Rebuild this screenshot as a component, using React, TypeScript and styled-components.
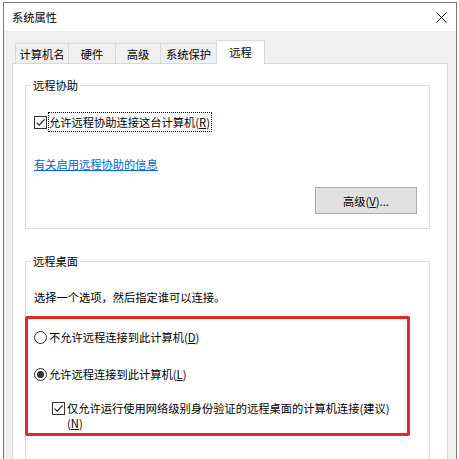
import React from 'react';
import styled, { createGlobalStyle } from 'styled-components';

const Global = createGlobalStyle`
  html, body { margin: 0; padding: 0; background: #fff; }
  body {
    font-family: "Noto Sans CJK SC", "Noto Sans", sans-serif;
    font-size: 11.25px;
    color: #000;
    overflow: hidden;
  }
  * { box-sizing: border-box; }
`;

const Page = styled.div`
  height: 459px;
  overflow: hidden;
  padding: 2px 0 0 3px;
`;

const Dialog = styled.div`
  width: 454px;
  height: 540px;
  border: 1px solid #7a7a7a;
  background: #f0f0f0;
  display: flex;
  flex-direction: column;
`;

const TitleBar = styled.div`
  height: 28px;
  flex: none;
  background: #fff;
  display: flex;
  align-items: center;
  justify-content: space-between;
  padding-left: 8px;
`;

const Title = styled.span`
  line-height: 16px;
`;

const CloseBox = styled.div`
  width: 30px;
  height: 28px;
  display: flex;
  align-items: center;
  justify-content: center;
`;

const Body = styled.div`
  flex: 1;
  display: flex;
  flex-direction: column;
  padding: 9px 8px 0 8px;
`;

const TabStrip = styled.div`
  height: 23px;
  display: flex;
  align-items: flex-end;
  padding-left: 3px;
  position: relative;
  z-index: 1;
`;

const Tab = styled.div<{ $w: number; $active?: boolean }>`
  width: ${(p) => p.$w}px;
  height: ${(p) => (p.$active ? 24 : 20)}px;
  margin-bottom: ${(p) => (p.$active ? -1 : 0)}px;
  margin-left: -1px;
  &:first-child { margin-left: 0; }
  border: 1px solid #d9d9d9;
  border-bottom: none;
  background: ${(p) => (p.$active ? '#fff' : '#f0f0f0')};
  display: flex;
  align-items: ${(p) => (p.$active ? 'flex-start' : 'center')};
  padding-top: ${(p) => (p.$active ? 3 : 0)}px;
  justify-content: center;
  line-height: 16px;
  position: relative;
  z-index: ${(p) => (p.$active ? 2 : 1)};
`;

const Panel = styled.div`
  flex: 1;
  background: #fff;
  border: 1px solid #d9d9d9;
  padding: 13px 17px 0 12px;
`;

const Group = styled.fieldset<{ $gap?: number; $tall?: boolean }>`
  margin: ${(p) => p.$gap ?? 0}px 0 0 0;
  padding: 0;
  border: 1px solid #dcdcdc;
  min-width: 0;
  min-height: ${(p) => (p.$tall ? '260px' : 'auto')};
`;

const Legend = styled.legend`
  padding: 0 2px;
  margin-left: 5px;
  line-height: 16px;
`;

const GroupBody = styled.div`
  display: flex;
  flex-direction: column;
  align-items: flex-start;
  padding: 0 8px 14px 8px;
`;

const CheckRow = styled.div<{ $mt: number }>`
  margin-top: ${(p) => p.$mt}px;
  height: 20px;
  display: flex;
  align-items: center;
  gap: 1px;
`;

const FocusLabel = styled.span`
  border: 1px dotted #000;
  height: 20px;
  display: flex;
  align-items: center;
  padding: 0 1px 0 0;
  line-height: 16px;
`;

const Link = styled.a`
  margin-top: 24px;
  line-height: 16px;
  color: #0066cc;
  text-decoration: underline;
  cursor: pointer;
`;

const Button = styled.button`
  margin-top: 15px;
  align-self: flex-end;
  margin-right: 4px;
  width: 102px;
  height: 27px;
  background: #e1e1e1;
  border: 1px solid #adadad;
  font: inherit;
  color: #000;
  padding: 0;
`;

const Desc = styled.div`
  margin-top: 20px;
  line-height: 16px;
`;

const Highlight = styled.div`
  margin-top: 11px;
  margin-left: -9px;
  width: 385px;
  border: 3px solid #e0282e;
  border-radius: 2px;
  padding: 10px 0 2px 6px;
  display: flex;
  flex-direction: column;
`;

const OptionRow = styled.div<{ $mt?: number }>`
  margin-top: ${(p) => p.$mt ?? 0}px;
  height: 16px;
  display: flex;
  align-items: center;
  gap: 2px;
  line-height: 16px;
`;

const SubCheckRow = styled.div`
  margin-top: 19px;
  padding-left: 18px;
  display: flex;
  align-items: flex-start;
  gap: 2px;
`;

const SubText = styled.span`
  line-height: 15px;
`;

const BoxIcon = styled.svg`
  flex: none;
  display: block;
`;

const Mn = styled.u`
  text-decoration: underline;
  text-underline-offset: 1px;
`;

const CheckBox: React.FC<{ style?: React.CSSProperties }> = ({ style }) => (
  <BoxIcon width="13" height="13" viewBox="0 0 13 13" style={style}>
    <rect x="0.5" y="0.5" width="12" height="12" fill="#fff" stroke="#333" />
    <path d="M2.6 6.6 L5.2 9.2 L10.6 3.4" fill="none" stroke="#222" strokeWidth="1.2" />
  </BoxIcon>
);

const Radio: React.FC<{ checked?: boolean }> = ({ checked }) => (
  <BoxIcon width="13" height="13" viewBox="0 0 13 13">
    <circle cx="6.5" cy="6.5" r="6" fill="#fff" stroke="#333" />
    {checked && <circle cx="6.5" cy="6.5" r="3.5" fill="#333" />}
  </BoxIcon>
);

const tabs = [
  { label: '计算机名', w: 54 },
  { label: '硬件', w: 48 },
  { label: '高级', w: 46 },
  { label: '系统保护', w: 57 },
  { label: '远程', w: 49, active: true },
];

export default function App() {
  return (
    <>
      <Global />
      <Page>
        <Dialog>
          <TitleBar>
            <Title>系统属性</Title>
            <CloseBox>
              <svg width="11" height="11" viewBox="0 0 11 11">
                <path d="M0.5 0.5 L10.5 10.5 M10.5 0.5 L0.5 10.5" stroke="#111" strokeWidth="1" />
              </svg>
            </CloseBox>
          </TitleBar>
          <Body>
            <TabStrip>
              {tabs.map((t) => (
                <Tab key={t.label} $w={t.w} $active={t.active}>
                  {t.label}
                </Tab>
              ))}
            </TabStrip>
            <Panel>
              <Group>
                <Legend>远程协助</Legend>
                <GroupBody>
                  <CheckRow $mt={19}>
                    <CheckBox />
                    <FocusLabel>
                      允许远程协助连接这台计算机(<Mn>R</Mn>)
                    </FocusLabel>
                  </CheckRow>
                  <Link>有关启用远程协助的信息</Link>
                  <Button>
                    高级(<Mn>V</Mn>)...
                  </Button>
                </GroupBody>
              </Group>
              <Group $gap={24} $tall>
                <Legend>远程桌面</Legend>
                <GroupBody>
                  <Desc>选择一个选项，然后指定谁可以连接。</Desc>
                  <Highlight>
                    <OptionRow>
                      <Radio />
                      <span>
                        不允许远程连接到此计算机(<Mn>D</Mn>)
                      </span>
                    </OptionRow>
                    <OptionRow $mt={21}>
                      <Radio checked />
                      <span>
                        允许远程连接到此计算机(<Mn>L</Mn>)
                      </span>
                    </OptionRow>
                    <SubCheckRow>
                      <CheckBox style={{ marginTop: 1 }} />
                      <SubText>
                        仅允许运行使用网络级别身份验证的远程桌面的计算机连接(建议)
                        <br />
                        (<Mn>N</Mn>)
                      </SubText>
                    </SubCheckRow>
                  </Highlight>
                </GroupBody>
              </Group>
            </Panel>
          </Body>
        </Dialog>
      </Page>
    </>
  );
}
